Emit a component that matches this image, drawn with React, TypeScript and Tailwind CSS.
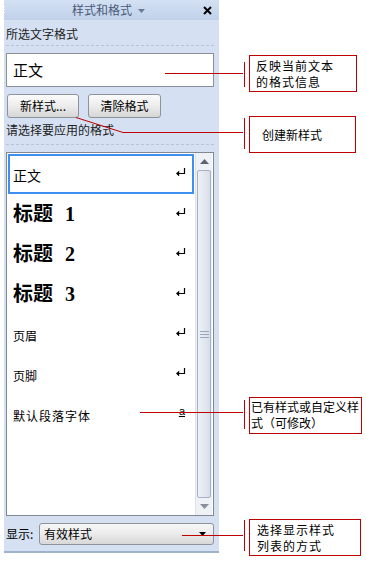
import React from "react";

const Ret = () => (
  <svg width="10" height="8" viewBox="0 0 10 8" className="block">
    <path d="M8.5 0V5.5H2" stroke="#000" strokeWidth="1.2" fill="none" />
    <path d="M0 5.5L3.2 2.5V8.5Z" fill="#000" />
  </svg>
);

function Item({ children, selected, mark = "ret", h = 40 }: { children: React.ReactNode; selected?: boolean; mark?: "ret" | "a"; h?: number }) {
  return (
    <div className="px-[1px]" style={{ height: h }}>
      <div
        className={
          "h-full flex items-center pl-[3px] pr-[6px] " +
          (selected ? "border-2 border-[#3d8ff0]" : "border-2 border-transparent")
        }
      >
        <div className="flex-1 min-w-0 whitespace-nowrap">{children}</div>
        {mark === "ret" ? (
          <div className="-mt-[4px]">
            <Ret />
          </div>
        ) : (
          <span className="text-[11px] leading-none underline text-black -mt-[6px] mr-[1px]" style={{ fontFamily: "'Liberation Sans', sans-serif" }}>
            a
          </span>
        )}
      </div>
    </div>
  );
}

export default function App() {
  const cjk = "'Noto Sans CJK SC', sans-serif";
  const heading = "'Liberation Serif', 'Noto Sans CJK SC', serif";
  return (
    <div className="relative w-[366px] h-[565px] bg-white overflow-hidden text-black" style={{ fontFamily: cjk }}>
      {/* Task pane */}
      <div className="ml-[4px] w-[215px] h-[553px] bg-[#d5e1f2] flex flex-col border-b-2 border-[#9fb2cc]">
        {/* header */}
        <div className="h-[20px] flex items-center bg-gradient-to-b from-[#d4e1f4] to-[#bfd1ea] relative">
          <div className="absolute left-0 top-[6px] flex flex-col gap-[2px]">
            <span className="w-[1px] h-[1px] bg-white" />
            <span className="w-[1px] h-[1px] bg-white" />
            <span className="w-[1px] h-[1px] bg-white" />
          </div>
          <span className="ml-[68px] text-[12px] leading-none text-[#4a5a78]">样式和格式</span>
          <svg width="7" height="4" viewBox="0 0 7 4" className="ml-[6px] mt-[1px]">
            <path d="M0 0H7L3.5 4Z" fill="#6b7a94" />
          </svg>
          <svg width="9" height="9" viewBox="0 0 9 9" className="ml-auto mr-[7px]">
            <path d="M1 1L8 8M8 1L1 8" stroke="#000" strokeWidth="2" />
          </svg>
        </div>

        <div className="pl-[2px] pr-[5px] flex flex-col">
          <div className="mt-[7px] text-[12px] leading-[14px] text-[#222]">所选文字格式</div>
          <div className="mt-[4px] border-t border-dashed border-[#b7c2d2]" />
          <div className="mt-[7px] h-[34px] bg-white border border-[#8a8f98] flex items-center pl-[6px] text-[15px]">正文</div>

          <div className="mt-[7px] h-[24px] flex gap-[9px] ml-[1px]">
            <button className="w-[72px] h-full rounded-[3px] border border-[#8e9299] bg-gradient-to-b from-[#fbfbfb] via-[#ececec] to-[#d6d6d6] text-[12px] leading-none flex items-center justify-center">
              新样式...
            </button>
            <button className="w-[73px] h-full rounded-[3px] border border-[#8e9299] bg-gradient-to-b from-[#fbfbfb] via-[#ececec] to-[#d6d6d6] text-[12px] leading-none flex items-center justify-center">
              清除格式
            </button>
          </div>

          <div className="mt-[5px] text-[12px] leading-[14px] text-[#222]">请选择要应用的格式</div>
          <div className="mt-[7px] border-t border-dashed border-[#b7c2d2]" />

          {/* style list */}
          <div className="mt-[7px] h-[364px] bg-white border border-[#828892] flex">
            <div className="flex-1 pt-[1px]">
              <Item selected>
                <span className="text-[14px]">正文</span>
              </Item>
              <Item>
                <span className="text-[20px] font-bold" style={{ fontFamily: heading }}>
                  标题<span className="ml-[12px]">1</span>
                </span>
              </Item>
              <Item>
                <span className="text-[20px] font-bold" style={{ fontFamily: heading }}>
                  标题<span className="ml-[12px]">2</span>
                </span>
              </Item>
              <Item>
                <span className="text-[20px] font-bold" style={{ fontFamily: heading }}>
                  标题<span className="ml-[12px]">3</span>
                </span>
              </Item>
              <Item>
                <span className="text-[12px]">页眉</span>
              </Item>
              <Item>
                <span className="text-[12px]">页脚</span>
              </Item>
              <Item mark="a">
                <span className="text-[12px] tracking-[1px]">默认段落字体</span>
              </Item>
            </div>
            {/* scrollbar */}
            <div className="w-[17px] mr-[1px] bg-[#eef1f6] border-l border-[#dde2ea] flex flex-col">
              <div className="h-[17px] flex items-center justify-center">
                <svg width="9" height="5" viewBox="0 0 9 5">
                  <path d="M0 5H9L4.5 0Z" fill="#5d6470" />
                </svg>
              </div>
              <div className="flex-1 mx-[1px] rounded-[2px] border border-[#a5b2c6] bg-gradient-to-r from-[#eef1f7] to-[#d8dee9] flex flex-col items-center justify-center gap-[2px]">
                <span className="w-[9px] h-[1px] bg-[#9aa7bd]" />
                <span className="w-[9px] h-[1px] bg-[#9aa7bd]" />
                <span className="w-[9px] h-[1px] bg-[#9aa7bd]" />
              </div>
              <div className="h-[17px] flex items-center justify-center">
                <svg width="9" height="5" viewBox="0 0 9 5">
                  <path d="M0 0H9L4.5 5Z" fill="#8a909a" />
                </svg>
              </div>
            </div>
          </div>

          {/* show row */}
          <div className="mt-[7px] h-[22px] flex items-center">
            <span className="text-[12px] leading-none w-[33px]">显示:</span>
            <div className="w-[175px] h-full rounded-[3px] border border-[#8e9299] bg-gradient-to-b from-[#f7f7f7] via-[#ebebeb] to-[#d8d8d8] flex items-center pl-[4px] pr-[7px]">
              <span className="text-[12px] leading-none flex-1">有效样式</span>
              <svg width="7" height="4" viewBox="0 0 7 4">
                <path d="M0 0H7L3.5 4Z" fill="#000" />
              </svg>
            </div>
          </div>
        </div>
      </div>

      {/* Callout lines */}
      <svg className="absolute left-0 top-0 pointer-events-none" width="366" height="565">
        <g stroke="#c00000" strokeWidth="1" fill="none" shapeRendering="crispEdges">
          <path d="M165 73.5H243" />
          <path d="M244.5 62V87" />
          <path d="M243 132.5H123" />
          <path d="M244.5 118V149" />
          <path d="M140 412.5H243" />
          <path d="M244.5 400V429" />
          <path d="M182 535.5H243" />
          <path d="M244.5 520V551" />
        </g>
        <path d="M76 117.5L123 132.5" stroke="#c00000" strokeWidth="1" fill="none" />
      </svg>

      {/* Callout boxes */}
      <div className="absolute left-[249px] top-[55px] w-[108px] h-[37px] border border-[#c00000] bg-white pl-[6px] pt-[2px] text-[12px] leading-[16px] tracking-[1px] whitespace-nowrap">
        反映当前文本
        <br />
        的格式信息
      </div>
      <div className="absolute left-[249px] top-[116px] w-[107px] h-[37px] border border-[#c00000] bg-white pl-[12px] flex items-center text-[12px] whitespace-nowrap">
        创建新样式
      </div>
      <div className="absolute left-[249px] top-[397px] w-[113px] h-[37px] border border-[#c00000] bg-white pl-[1px] pt-[1px] text-[12px] leading-[16px] whitespace-nowrap">
        已有样式或自定义样
        <br />
        式（可修改）
      </div>
      <div className="absolute left-[249px] top-[519px] w-[112px] h-[37px] border border-[#c00000] bg-white pl-[7px] pt-[2px] text-[12px] leading-[16px] tracking-[1px] whitespace-nowrap">
        选择显示样式
        <br />
        列表的方式
      </div>
    </div>
  );
}
